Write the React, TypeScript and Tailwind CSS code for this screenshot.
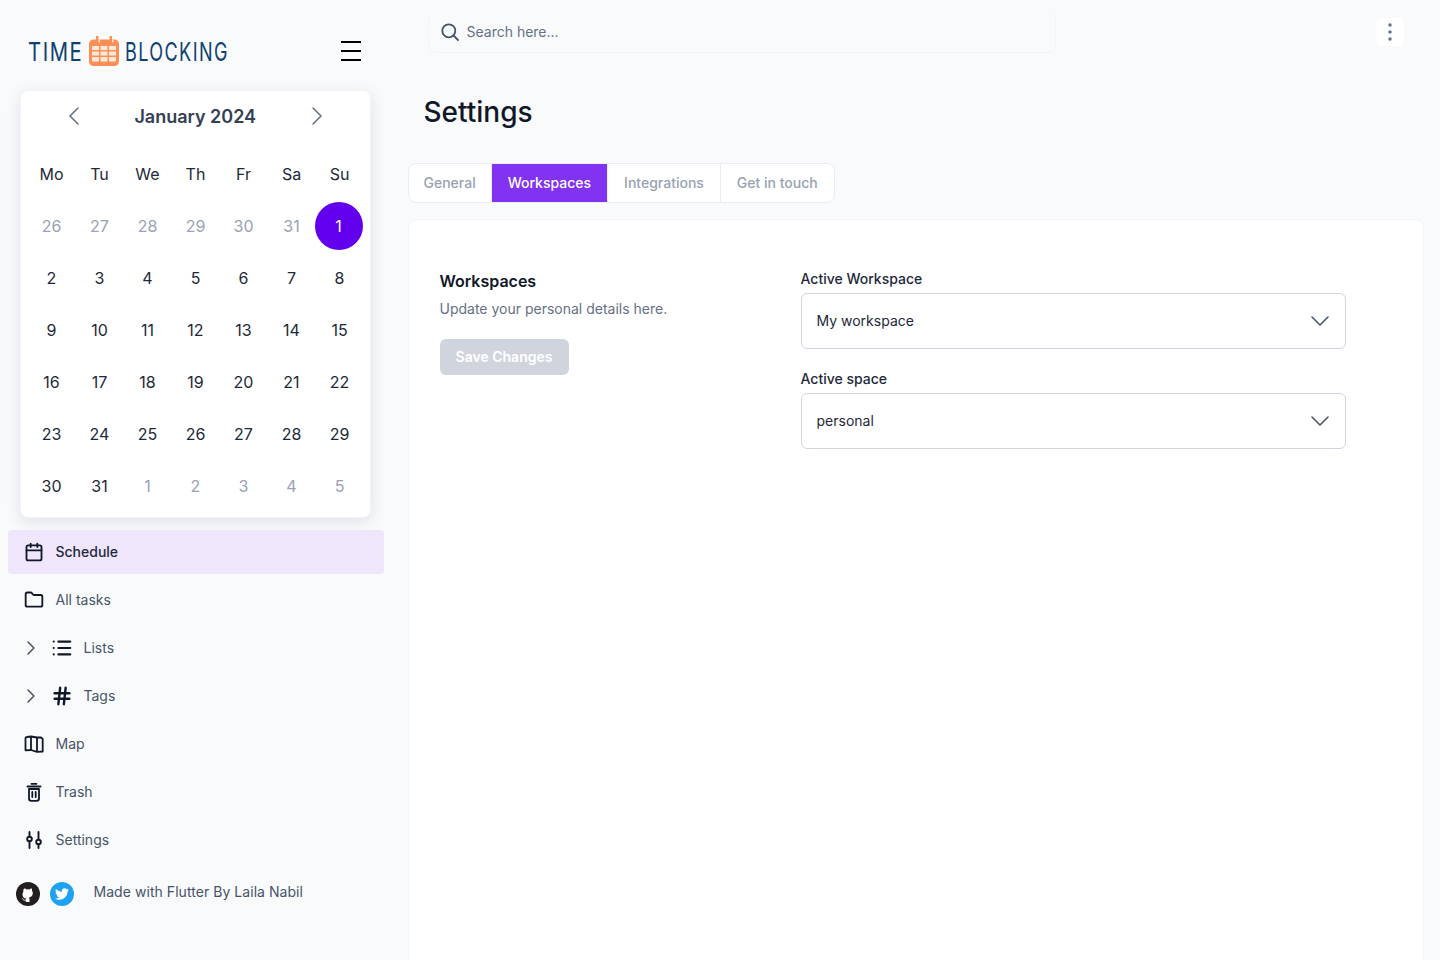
import { ChevronDown, ChevronLeft, ChevronRight, EllipsisVertical, Calendar, Folder, Hash, List } from 'lucide-react';
import { FaTwitter } from 'react-icons/fa';

const weekDays = ['Mo', 'Tu', 'We', 'Th', 'Fr', 'Sa', 'Su'];

const days = [
  [26, 27, 28, 29, 30, 31, 1],
  [2, 3, 4, 5, 6, 7, 8],
  [9, 10, 11, 12, 13, 14, 15],
  [16, 17, 18, 19, 20, 21, 22],
  [23, 24, 25, 26, 27, 28, 29],
  [30, 31, 1, 2, 3, 4, 5],
];

const tabs = ['General', 'Workspaces', 'Integrations', 'Get in touch'];

function SearchIcon() {
  return (
    <svg width="20" height="20" viewBox="0 0 20 20" fill="none" stroke="currentColor" strokeWidth="1.8" strokeLinecap="round">
      <circle cx="8.800" cy="8.800" r="6.500" />
      <path d="M13.500 13.500 18 18" />
    </svg>
  );
}

function MapIcon() {
  return (
    <svg width="20" height="20" viewBox="0 0 20 20" fill="none" stroke="currentColor" strokeWidth="1.8" strokeLinejoin="round">
      <path d="M1.500 4.500Q1.500 3 3 3L7 2.500 13 3.500 17 3.500 18.700 5V17.500L13 17.800 7 16 1.500 16.300z" />
      <path d="M7 2.500V16M13 3.500V17.800" />
    </svg>
  );
}

function TrashIcon() {
  return (
    <svg width="20" height="20" viewBox="0 0 20 20" fill="none" stroke="currentColor" strokeWidth="1.800" strokeLinecap="round">
      <path d="M3.500 4.500h13M7.500 1.800h5" />
      <path d="M5 7v9.500Q5 18.800 7.300 18.800h5.400Q15 18.800 15 16.500V7z" strokeLinejoin="round" />
      <path d="M8.300 10v5M11.700 10v5" />
    </svg>
  );
}

function SlidersIcon() {
  return (
    <svg width="20" height="20" viewBox="0 0 20 20" fill="none" stroke="currentColor" strokeWidth="1.900" strokeLinecap="round">
      <path d="M5.500 2v4.500M5.500 11.500V18M14.500 2v7.500M14.500 14.500V18" />
      <circle cx="5.500" cy="9" r="2.300" />
      <circle cx="14.500" cy="12" r="2.300" />
    </svg>
  );
}

function GithubBadge() {
  return (
    <svg width="24" height="24" viewBox="0 0 24 24">
      <circle cx="12" cy="12" r="12" fill="#231f20" />
      <path
        fill="#fff"
        d="M8.200 6.500c1-.1 1.800.5 2.300 1a7 7 0 0 1 3 0c.5-.5 1.300-1.100 2.300-1 .3.8.3 1.600.1 2.200.6.700.9 1.500.9 2.400 0 3-1.800 4-3.900 4.300.4.400.6 1 .6 1.700V20h-3.700v-1.500c-1.800.4-2.700-.4-3.200-1.500-.2-.4-.5-.7-.9-.9.800 0 1.300.5 1.700 1.100.5.700 1.300.700 2.400.400 0-.4.200-.8.500-1.100-2.100-.3-3.800-1.300-3.800-4.300 0-.9.300-1.700.9-2.400-.2-.6-.2-1.400.1-2.200z"
      />
    </svg>
  );
}

function LogoMark() {
  return (
    <svg width="30" height="30" viewBox="0 0 30 30">
      <rect x="0" y="3.500" width="30" height="26.500" rx="4.500" fill="#fb8f54" />
      <rect x="7" y="0" width="2.500" height="6" fill="#fb8f54" />
      <rect x="20.500" y="0" width="2.500" height="6" fill="#fb8f54" />
      <rect x="9.500" y="3.500" width="1.500" height="3" fill="#fde3d3" />
      <rect x="23" y="3.500" width="1.500" height="3" fill="#fde3d3" />
      <g fill="#fde9dc">
        <rect x="3" y="10" width="7" height="4" />
        <rect x="11.500" y="10" width="7" height="4" />
        <rect x="20" y="10" width="7" height="4" />
        <rect x="3" y="15.500" width="7" height="4" />
        <rect x="11.500" y="15.500" width="7" height="4" />
        <rect x="20" y="15.500" width="7" height="4" />
        <rect x="3" y="21" width="7" height="4.500" />
        <rect x="11.500" y="21" width="7" height="4.500" />
        <rect x="20" y="21" width="7" height="4.500" />
      </g>
    </svg>
  );
}

function NavRow({ icon, label, active, nested }: { icon: React.ReactNode; label: string; active?: boolean; nested?: boolean }) {
  return (
    <div className={`flex h-11 items-center rounded-[4px] pl-4 text-sm ${active ? 'bg-[#f0e6fc] font-medium text-[#1d2939]' : 'text-[#475467]'}`}>
      {nested && <ChevronRight className="ml-[-5px] mr-[9px] h-6 w-6 text-[#475467]" strokeWidth={1.5} />}
      <span className="flex h-5 w-5 items-center justify-center text-[#101828]">{icon}</span>
      <span className="ml-3">{label}</span>
    </div>
  );
}

function SelectField({ label, value }: { label: string; value: string }) {
  return (
    <div>
      <div className="text-sm font-medium leading-5 text-[#1d2939]">{label}</div>
      <div className="mt-[4px] flex h-14 items-center justify-between rounded-md border border-[#d0d5dd] px-[15px] text-sm text-[#1d2939]">
        <span>{value}</span>
        <ChevronDown className="mr-[-6px] h-8 w-8 text-[#475467]" strokeWidth={1.2} />
      </div>
    </div>
  );
}

export default function App() {
  return (
    <div className="flex h-screen overflow-hidden bg-[#f9fafc] font-['Inter',sans-serif]">
      <aside className="ml-[-0.5px] flex w-[408px] shrink-0 flex-col">
        <div className="flex h-[90px] items-start pl-7 pt-9">
          <div className="flex h-[30px] w-[200px] items-center">
            <span className="w-[54px] origin-left scale-x-[0.78] whitespace-nowrap text-[26px] tracking-[2px] text-[#0f4170]">TIME</span>
            <span className="ml-[7px]"><LogoMark /></span>
            <span className="ml-[6px] w-[103px] origin-left scale-x-[0.695] whitespace-nowrap text-[26px] tracking-[2px] text-[#0f4170]">BLOCKING</span>
          </div>
          <div className="ml-[113px] mt-[5px] flex h-5 w-5 flex-col justify-between">
            <span className="h-0.5 bg-black" />
            <span className="h-0.5 bg-black" />
            <span className="h-0.5 bg-black" />
          </div>
        </div>

        <div className="ml-5 h-[428px] w-[351.500px] rounded-lg border border-[#f2f4f7] bg-white pl-[7px] shadow-[0_4px_16px_rgba(16,24,40,0.10)]">
          <div className="flex h-[49px] items-center justify-between pl-[30px] pr-[37px]">
            <ChevronLeft className="h-8 w-8 text-[#667085]" strokeWidth={1.2} />
            <span className="mt-[2px] text-lg font-semibold text-[#344054]">January 2024</span>
            <ChevronRight className="h-8 w-8 text-[#667085]" strokeWidth={1.2} />
          </div>
          <div className="grid h-[60px] w-[336px] grid-cols-7 items-center pt-[8px] text-center text-base text-[#1d2939]">
            {weekDays.map(d => (
              <span key={d}>{d}</span>
            ))}
          </div>
          {days.map((week, i) => (
            <div key={i} className="grid h-[52px] w-[336px] grid-cols-7 items-center text-center text-base">
              {week.map((d, j) => {
                const muted = (i === 0 && d > 7) || (i === 5 && d < 7);
                if (i === 0 && d === 1) {
                  return (
                    <span key={j} className="ml-[-1px] flex h-12 w-12 items-center justify-center rounded-full bg-[#6200ee] text-white">
                      {d}
                    </span>
                  );
                }
                return (
                  <span key={j} className={muted ? 'text-[#98a2b3]' : 'text-[#1d2939]'}>
                    {d}
                  </span>
                );
              })}
            </div>
          ))}
        </div>

        <nav className="ml-2 mt-3 flex w-[376px] flex-col gap-1">
          <NavRow active icon={<Calendar className="h-5 w-5 shrink-0" strokeWidth={2.2} />} label="Schedule" />
          <NavRow icon={<Folder className="h-5 w-5 shrink-0" strokeWidth={2.2} />} label="All tasks" />
          <NavRow nested icon={<List className="h-[22px] w-[22px] shrink-0" strokeWidth={2.3} />} label="Lists" />
          <NavRow nested icon={<Hash className="h-[22px] w-[22px] shrink-0" strokeWidth={2.6} />} label="Tags" />
          <NavRow icon={<MapIcon />} label="Map" />
          <NavRow icon={<TrashIcon />} label="Trash" />
          <NavRow icon={<SlidersIcon />} label="Settings" />
        </nav>

        <div className="ml-4 mt-[20px] flex items-center text-sm text-[#475467]">
          <GithubBadge />
          <span className="ml-[10px] flex h-6 w-6 items-center justify-center rounded-full bg-[#1da1f2] text-white">
            <FaTwitter className="h-3.5 w-3.5" />
          </span>
          <span className="ml-5 mt-[-4px] tracking-[0.05px]">Made with Flutter By Laila Nabil</span>
        </div>
      </aside>

      <main className="flex min-w-0 flex-1 flex-col pr-[16.500px]">
        <div className="flex items-start justify-between pl-5 pt-3">
          <div className="flex h-[41px] w-[628px] items-center gap-[7px] rounded-lg border border-t-0 border-[#f2f4f7] pb-px pl-[11px] text-sm text-[#667085]">
            <span className="text-[#475467]"><SearchIcon /></span>
            <span>Search here...</span>
          </div>
          <div className="mr-5 mt-[6px] flex h-7 w-7 items-center justify-center rounded-md bg-white text-[#667085]">
            <EllipsisVertical className="h-6 w-6" strokeWidth={1.5} />
          </div>
        </div>

        <h1 className="ml-4 mt-[41px] text-[28px] font-medium leading-9 text-[#101828]">Settings</h1>

        <div className="mt-[33px] flex h-10 w-[427px] overflow-hidden whitespace-nowrap rounded-lg border border-[#eaecf0] bg-white text-sm font-medium text-[#98a2b3]">
          {tabs.map(tab => (
            <div
              key={tab}
              className={`flex items-center border-l border-[#eaecf0] px-4 first:border-l-0 first:px-[15px] ${tab === 'Workspaces' ? 'bg-[#8133f1] text-white' : ''}`}
            >
              {tab}
            </div>
          ))}
        </div>

        <section className="mt-[16px] flex flex-1 rounded-t-lg border border-b-0 border-[#f2f4f7] bg-white pl-[31px] pt-[49px]">
          <div className="w-[361px] shrink-0">
            <h2 className="text-base font-semibold leading-6 text-[#101828]">Workspaces</h2>
            <p className="mt-[6px] text-sm leading-5 text-[#667085]">Update your personal details here.</p>
            <button className="mt-5 flex h-9 w-[129px] items-center justify-center rounded-md bg-[#d0d5dd] text-sm font-semibold text-white">
              Save Changes
            </button>
          </div>
          <div className="flex w-[545.500px] flex-col gap-5">
            <SelectField label="Active Workspace" value="My workspace" />
            <SelectField label="Active space" value="personal" />
          </div>
        </section>
      </main>
    </div>
  );
}
